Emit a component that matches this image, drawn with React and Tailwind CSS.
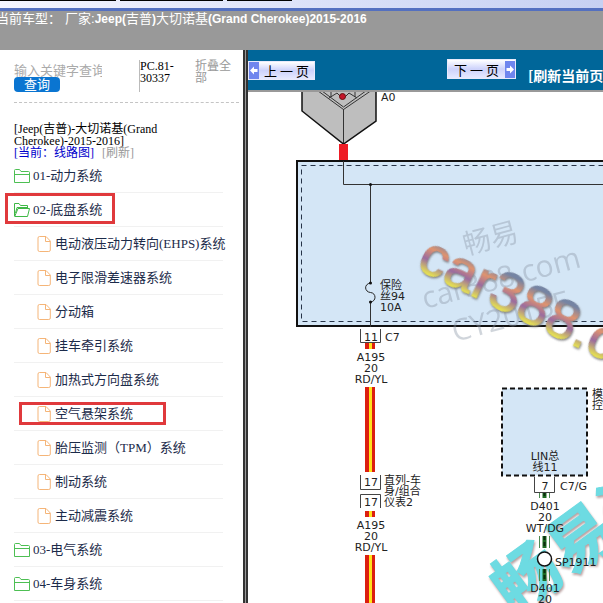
import React from "react";

const TREE = [
  { label: "01-动力系统" },
  {
    label: "02-底盘系统",
    open: true,
    marked: true,
    children: [
      { label: "电动液压动力转向(EHPS)系统" },
      { label: "电子限滑差速器系统" },
      { label: "分动箱" },
      { label: "挂车牵引系统" },
      { label: "加热式方向盘系统" },
      { label: "空气悬架系统", marked: true },
      { label: "胎压监测（TPM）系统" },
      { label: "制动系统" },
      { label: "主动减震系统" },
    ],
  },
  { label: "03-电气系统" },
  { label: "04-车身系统" },
];

export default function App() {
  return (
    <div className="flex h-screen flex-col overflow-hidden bg-white">
      <TopBar />
      <div className="flex min-h-0 flex-1">
        <Sidebar />
        <div className="w-[5px] shrink-0 border-x-2 border-[#333333] bg-[#999999]" />
        <Viewer />
      </div>
    </div>
  );
}

function TopBar() {
  return (
    <header className="shrink-0">
      <div className="flex h-2 items-start gap-1 bg-gradient-to-r from-[#f4f5ff] to-[#c6d0f2]">
        <div className="h-px w-[116px] bg-black" />
        <div className="h-px w-[103px] bg-black" />
        <div className="h-px w-[65px] bg-black" />
      </div>
      <div className="h-[42px] overflow-hidden border-t-3 border-[#5470c0] bg-[#999999] whitespace-nowrap text-white">
        <h1 className="-ml-1 flex font-['Liberation_Sans','Noto_Sans_CJK_SC',sans-serif] text-[13px] leading-4">
          <span className="mr-1">当前车型：</span>
          <span>厂家:</span>
          <span>
            <b className="text-xs">Jeep(</b>吉普<b className="text-xs">)</b>大切诺基
            <b className="text-xs">(Grand Cherokee)2015-2016</b>
          </span>
        </h1>
      </div>
    </header>
  );
}

function Sidebar() {
  return (
    <aside className="w-[243px] shrink-0 overflow-hidden pl-3.5 font-['Liberation_Serif','Noto_Sans_CJK_SC',serif] text-xs leading-3 text-[#222222]">
      <div className="mr-1 flex h-[53px] items-start border-b border-dashed border-[#c4c4c4] pt-2.5">
        <form className="w-[125px] shrink-0" onSubmit={(e) => e.preventDefault()}>
          <input
            type="text"
            aria-label="关键字"
            placeholder="输入关键字查询"
            className="block h-[17px] w-[88px] pt-0.5 font-['Noto_Sans_CJK_SC',sans-serif] text-[13px] leading-4 placeholder:text-[#aaaaaa]"
          />
          <button
            type="submit"
            className="flex h-[15px] w-[46px] items-center justify-center rounded bg-[#0a75d1] text-[13px] text-white"
          >
            查询
          </button>
        </form>
        <div className="h-8 w-14 shrink-0 border-l border-[#bbbbbb] text-black">
          PC.81-
          <br />
          30337
        </div>
        <button type="button" className="w-9 text-left leading-3 text-[#999999]">
          折叠全部
        </button>
      </div>

      <div className="h-14 pt-5">
        <div className="w-[160px] text-black">
          [Jeep(吉普)-大切诺基(Grand Cherokee)-2015-2016]
        </div>
        <div className="flex gap-2">
          <a href="#current" className="text-[#0000cc]">[当前：线路图]</a>
          <a href="#refresh" className="text-[#999999]">[刷新]</a>
        </div>
      </div>

      <ul className="mr-5 text-[13px] text-[#1c2b4a]">
        {TREE.map((node) => (
          <li key={node.label}>
            <TreeRow node={node} icon={node.open ? <FolderOpen /> : <Folder />} />
            {node.children && (
              <ul>
                {node.children.map((child) => (
                  <li key={child.label}>
                    <TreeRow node={child} icon={<File />} nested />
                  </li>
                ))}
              </ul>
            )}
          </li>
        ))}
      </ul>
    </aside>
  );
}

function TreeRow({ node, icon, nested }) {
  return (
    <a
      href="#node"
      className={[
        "relative flex h-[34px] items-center border-b border-[#f1f1f1] whitespace-nowrap",
        nested ? "gap-1 pl-[23px]" : "gap-[3px]",
      ].join(" ")}
    >
      {icon}
      <span>{node.label}</span>
      {node.marked && (
        <span
          className={[
            "pointer-events-none absolute border-3 border-[#e0393c]",
            nested
              ? "top-[5px] left-[5px] h-[23px] w-[147px]"
              : "top-0 -left-[9px] h-[31px] w-[110px]",
          ].join(" ")}
        />
      )}
    </a>
  );
}

function Folder() {
  return (
    <svg width="16" height="14" viewBox="0 0 16 14" fill="none" stroke="#4dbf53" className="shrink-0">
      <path d="M.5 13.500v-12q0-1 1-1h4l1.500 2h7.500q1 0 1 1v10zM.5 5.500h15" />
    </svg>
  );
}

function FolderOpen() {
  return (
    <svg width="16" height="14" viewBox="0 0 16 14" fill="none" stroke="#3fb846" className="shrink-0">
      <path d="M.5 13V.5h4.500l1.500 2h7V5.500M.7 13.500 4 5.500h11.500l-2 8zM1.500 10 3 4.500h10.500" />
    </svg>
  );
}

function File() {
  return (
    <svg width="14" height="16" viewBox="0 0 14 16" fill="none" stroke="#f5b578" className="shrink-0">
      <path d="M1 2q0-1.500 1.500-1.500H9L13.300 5v9q0 1.500-1.500 1.500H2.500Q1 15.500 1 14zM8.500.8V5.500h4.500" />
    </svg>
  );
}

function Viewer() {
  return (
    <main className="flex min-w-0 flex-1 flex-col">
      <div className="flex h-[42px] shrink-0 items-start overflow-hidden border-b-2 border-[#999999] bg-[#006699] font-['Noto_Sans_CJK_SC',sans-serif] whitespace-nowrap">
        <button
          type="button"
          className="mt-[11px] flex h-[19px] w-[67px] shrink-0 items-center border border-[#e8eafc] bg-gradient-to-b from-white via-[#cdd2fb] to-[#e6e9ff] text-[13px] leading-none text-black"
        >
          <PageArrow left />
          <span className="flex-1 text-center">上 一 页</span>
        </button>
        <button
          type="button"
          className="mt-[9px] ml-[132px] flex h-5 w-[69px] shrink-0 items-center border border-[#e8eafc] bg-gradient-to-b from-white via-[#cdd2fb] to-[#e6e9ff] text-[13px] leading-none text-black"
        >
          <span className="flex-1 text-center">下 一 页</span>
          <PageArrow />
        </button>
        <a href="#reload" className="mt-4 ml-3 text-sm leading-[18px] font-bold text-white">
          [刷新当前页]
        </a>
      </div>
      <div className="min-h-0 flex-1 overflow-hidden">
        <Diagram />
      </div>
    </main>
  );
}

function PageArrow({ left }) {
  return (
    <svg width="10" height="17" viewBox="0 0 10 17" className="shrink-0">
      <rect width="10" height="17" fill="#6f86ee" />
      <path
        d={left ? "M1 8.500 5 4.500v2.500h3.500v3H5v2.500z" : "M9 8.500 5 4.500v2.500H1.500v3H5v2.500z"}
        fill="#fff"
      />
    </svg>
  );
}

// A stack of centred lines, 11px apart
function Lines({ x, y, lines, anchor = "middle" }) {
  return (
    <text x={x} y={y} textAnchor={anchor}>
      {lines.map((line, i) => (
        <tspan key={line} x={x} dy={i ? 11 : 0}>
          {line}
        </tspan>
      ))}
    </text>
  );
}

function RedYellowWire({ y, height }) {
  return (
    <g>
      <rect x="365" y={y} width="10" height={height} fill="#dc1f10" />
      <rect x="369" y={y} width="3" height={height} fill="#ffe21c" />
    </g>
  );
}

function GreenWire({ y, height }) {
  return (
    <g>
      <path d={`M539.500 ${y}v${height}M549.500 ${y}v${height}`} stroke="#4d8a52" />
      <path d={`M544.500 ${y}v${height}`} stroke="#1d6b22" strokeWidth="4" />
      <path d={`M544.500 ${y}v${height}`} stroke="#0b2b0c" strokeWidth="2" strokeDasharray="4 2" />
    </g>
  );
}

function Diagram() {
  return (
    <svg
      width="800"
      height="700"
      viewBox="248 92 800 700"
      fill="none"
      className="block font-['DejaVu_Sans','Noto_Sans_CJK_SC',sans-serif] text-[11px]"
    >
      <defs>
        <linearGradient id="metal" x1="0" y1="0" x2="0" y2="1">
          <stop offset="0.25" stopColor="#7584a3" />
          <stop offset="0.42" stopColor="#df936f" />
          <stop offset="0.6" stopColor="#9a6b9f" />
          <stop offset="0.8" stopColor="#e3dd55" />
        </linearGradient>
      </defs>

      {/* connector block */}
      <path d="M302 88v23l41.500 33 32.500-23V88z" fill="#bebebe" stroke="#111" strokeWidth="1.500" />
      <path d="M318 88 343.500 107 370 88M314 88l29.500 21.500L375 88M343.500 109v34" stroke="#333" />
      <path d="M331 97v-5M355 97v-5M329 98l8-5 6 6 6-6 8 5" stroke="#333" />
      <circle cx="342.500" cy="96.500" r="3" fill="#c5162b" stroke="#611" />
      <rect x="339" y="144" width="9" height="16" fill="#ee1c25" />

      {/* fuse box */}
      <rect x="297" y="161" width="700" height="165" fill="#d4e6f6" stroke="#111" strokeWidth="2" />
      <rect x="301.500" y="165.500" width="690" height="156" stroke="#263347" strokeDasharray="5 4" />
      <path d="M343.500 161v23.500H990M370.500 184.500v98.500M370.500 302v25" stroke="#333" />
      <path d="M370.500 283c-7 1-6 9 0 9.500s6 9 0 9.500" stroke="#222" />
      <g fill="#111">
        <circle cx="370.500" cy="184.500" r="1.500" />
        <circle cx="370.500" cy="283" r="1.500" />
        <circle cx="370.500" cy="302" r="1.500" />
      </g>

      {/* module on the LIN bus */}
      <rect x="502" y="388.500" width="85" height="87" fill="#d4e6f6" stroke="#111" strokeWidth="2" strokeDasharray="5 3" />

      {/* wires */}
      <RedYellowWire y={343} height={6} />
      <RedYellowWire y={387} height={85} />
      <RedYellowWire y={511} height={6} />
      <RedYellowWire y={555} height={150} />
      <GreenWire y={492} height={6} />

      <g stroke="#444">
        <path d="M360.500 329v13.500h20V329" />
        <path d="M360.500 475v14.500h20V475" />
        <path d="M360.500 508v-13.500h20V508" />
        <path d="M534.500 477v15.500h20V477" />
      </g>

      {/* watermarks */}
      <g fill="#8c98a8" opacity="0.4" className="font-['Open_Sans','Noto_Sans_CJK_SC',sans-serif]">
        <text transform="translate(466 255) rotate(-15)" className="text-[28px]">畅易</text>
        <text transform="translate(425 309) rotate(-15)" className="text-[30px]">car388.com</text>
        <text transform="translate(455 342) rotate(-15)" className="text-[30px]">CY2015F</text>
      </g>
      <g
        fill="#6ddbe2"
        stroke="#6ddbe2"
        className="font-['Noto_Sans_CJK_SC',sans-serif] text-[66px] font-bold drop-shadow-[1px_2px_1px_#b8a0a0]"
      >
        <text transform="translate(514 616) rotate(-36)">畅易汽车</text>
      </g>

      <GreenWire y={536} height={12} />
      <GreenWire y={569} height={12} />
      <circle cx="544.500" cy="559" r="7" fill="#fff" stroke="#111" strokeWidth="1.500" />

      <g fill="#222">
        <text x="381" y="101">A0</text>
        <Lines x={380} y={289} lines={["保险", "丝94", "10A"]} anchor="start" />
        <text x="371" y="341" textAnchor="middle">11</text>
        <text x="385" y="341">C7</text>
        <Lines x={371} y={361} lines={["A195", "20", "RD/YL"]} />
        <text x="371" y="486" textAnchor="middle">17</text>
        <text x="371" y="506" textAnchor="middle">17</text>
        <Lines x={384} y={484} lines={["直列-车", "身/组合", "仪表2"]} anchor="start" />
        <Lines x={371} y={529} lines={["A195", "20", "RD/YL"]} />
        <Lines x={545} y={460} lines={["LIN总", "线11"]} />
        <text x="545" y="490" textAnchor="middle">7</text>
        <text x="560" y="490">C7/G</text>
        <Lines x={545} y={510} lines={["D401", "20", "WT/DG"]} />
        <text x="555" y="566">SP1911</text>
        <Lines x={545} y={592} lines={["D401", "20", "WT/DG"]} />
        <Lines x={592} y={398} lines={["模块", "控制"]} anchor="start" />
      </g>

      <text
        transform="translate(415 268) rotate(26)"
        fill="url(#metal)"
        stroke="url(#metal)"
        className="font-['Liberation_Sans',sans-serif] text-[56px] drop-shadow-[1px_1px_1px_#77777a]"
      >
        car388.com
      </text>
    </svg>
  );
}
